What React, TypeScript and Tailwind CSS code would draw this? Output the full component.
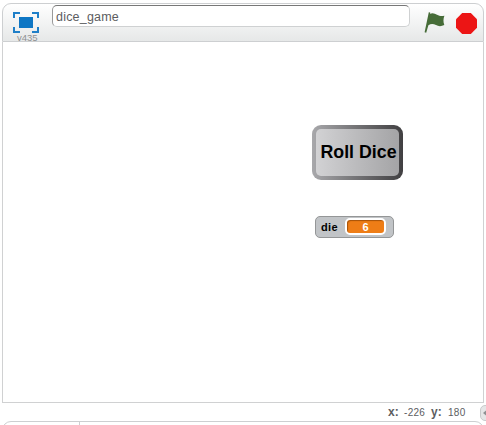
import React from "react";

function FullscreenIcon() {
  return (
    <svg width="26" height="21" viewBox="0 0 26 21" className="block" shapeRendering="crispEdges">
      <rect x="6" y="5" width="14" height="11" fill="#0e76c4" />
      <path
        d="M1 6V1H7 M19 1H25V6 M25 15V20H19 M7 20H1V15"
        fill="none"
        stroke="#1f7fc8"
        strokeWidth="2"
      />
    </svg>
  );
}

function FlagIcon() {
  return (
    <svg width="22" height="22" viewBox="0 0 22 22" className="block">
      <path
        d="M4.8 0.3L6.2 0.6L6 1.8C8.5 0.5 11 1.5 13 2.8C15.5 4.2 17.5 4.4 20.4 3.8C19.2 7 19.2 10 20.3 13.1C17 14.7 14.5 14.5 12 13.1C9.2 11.5 6.8 11.5 4.4 13.3L2.2 20.7L0.6 20.2Z"
        fill="#466c38"
      />
    </svg>
  );
}

function StopIcon() {
  return (
    <svg width="21" height="21" viewBox="0 0 21 21" className="block">
      <path d="M6.2 0H14.8L21 6.2V14.8L14.8 21H6.2L0 14.8V6.2Z" fill="#ec1515" />
    </svg>
  );
}

function Header() {
  return (
    <header className="flex h-[39px] items-start rounded-t-[9px] border border-[#cdcfd1] bg-linear-to-b from-white to-[#e6e8e8]">
      <div className="ml-[10px] mt-2 w-[26px] shrink-0">
        <FullscreenIcon />
        <div className="ml-[4px] h-[10px] text-[9.5px] leading-[10px] text-[#8e9092]">v435</div>
      </div>
      <div className="ml-[13px] mt-px h-[22px] w-[358px] shrink-0 rounded-[5px] border border-[#cfd1d2] border-t-[#777] border-l-[#999] bg-white pl-[3px] text-[12.5px] leading-[22px] tracking-[0.2px] text-[#5c5d5f]">
        dice_game
      </div>
      <div className="ml-[14px] mt-2 shrink-0">
        <FlagIcon />
      </div>
      <div className="ml-[10px] mt-[9px] shrink-0">
        <StopIcon />
      </div>
    </header>
  );
}

function DiceButton() {
  return (
    <div className="h-[55px] w-[91px] rounded-[9px] bg-linear-to-r from-[#a8a8ab] to-[#414042] p-[4px]">
      <div className="flex h-full items-center justify-center rounded-[5px] bg-linear-to-r from-[#d2d2d4] to-[#a4a4a6] whitespace-nowrap text-[17.8px] font-bold text-black">
        <span className="ml-[2px]">Roll Dice</span>
      </div>
    </div>
  );
}

function VariableMonitor() {
  return (
    <div className="flex h-[22px] w-[79px] items-center rounded-[5px] border border-[#949697] bg-[#c1c4c7] pl-[5px] text-[11px] font-bold text-black">
      <span className="w-[24px] leading-[20px] tracking-[0.3px]">die</span>
      <span className="mb-px h-[17px] w-[41px] rounded-[5px] border-2 border-white bg-[#ee7d16] text-center text-[11px] leading-[14px] text-white shadow-[inset_1px_1px_1px_#a65308]">
        6
      </span>
    </div>
  );
}

export default function App() {
  return (
    <div className="h-[425px] w-[486px] overflow-hidden bg-white pt-[3px] font-['Liberation_Sans',Arial,sans-serif]">
      <div className="ml-[2px] w-[482px]">
        <Header />
        <main className="h-[361px] w-[482px] border border-t-0 border-[#d0d1d2] bg-white pt-[83px] pl-[309px]">
          <DiceButton />
          <div className="mt-9 ml-[3px]">
            <VariableMonitor />
          </div>
        </main>
      </div>
      <div className="flex h-[18px] items-center overflow-hidden pl-[388px] text-[#5c5d5f]">
        <span className="w-4 shrink-0 text-[12px] font-bold">x:</span>
        <span className="w-[27px] shrink-0 text-[10px] tracking-[0.3px]">-226</span>
        <span className="w-[17px] shrink-0 text-[12px] font-bold">y:</span>
        <span className="w-[32px] shrink-0 text-[10px] tracking-[0.3px]">180</span>
        <span className="mt-[2px] flex h-[16px] w-[10px] shrink-0 items-center rounded-l-[5px] border border-[#c9cbcc] bg-[#e5e6e7] pl-[2px]">
          <svg width="5" height="8" viewBox="0 0 5 8" className="shrink-0">
            <path d="M5 0V8L0 4Z" fill="#8e9092" />
          </svg>
        </span>
      </div>
      <div className="ml-[2px] flex h-[20px] w-[482px] rounded-t-[9px] border border-[#cdcfd1] bg-white">
        <div className="w-[77px] border-r border-[#cdcfd1]" />
      </div>
    </div>
  );
}
